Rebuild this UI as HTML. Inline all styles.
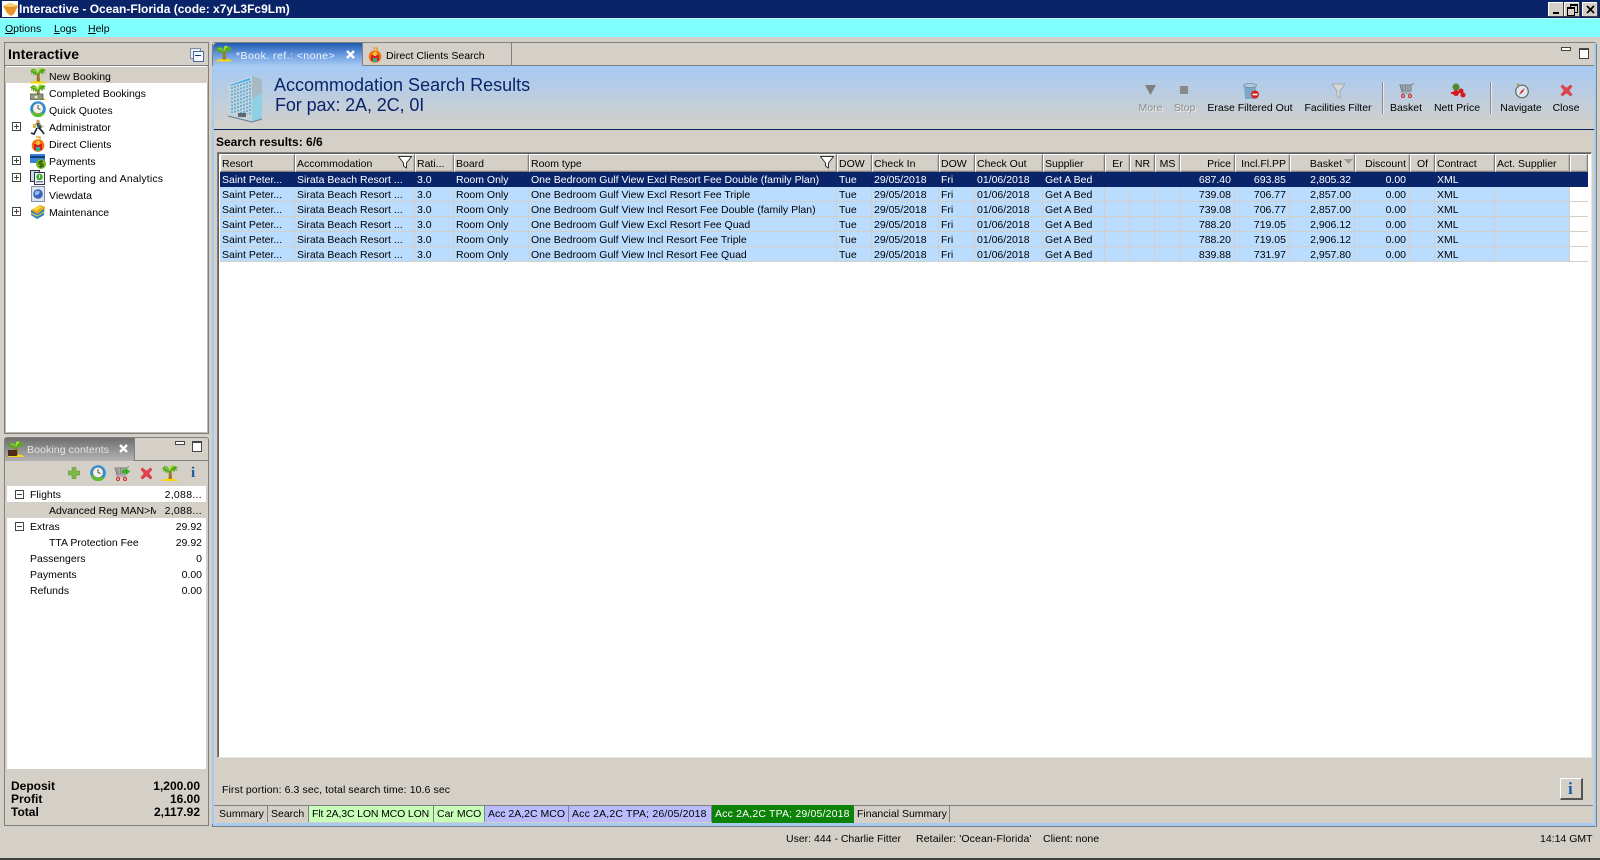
<!DOCTYPE html>
<html><head><meta charset="utf-8"><title>Interactive</title>
<style>
html,body{margin:0;padding:0;width:1600px;height:860px;overflow:hidden;background:#d4d0c8}
body{position:relative;font:10.5px "Liberation Sans",sans-serif;color:#000}
.a,.t,svg.i{position:absolute}
.t{white-space:nowrap;line-height:14px;margin-top:1px}
.b{font-weight:bold}
.c{transform:translateX(-50%)}
.r{text-align:right}
table{position:absolute;border-collapse:separate;border-spacing:0;table-layout:fixed;left:220px;top:154px;width:1368px;font-size:10.5px}
th{height:14px;padding:2px 1px 0;background:#d4d0c8;font-weight:normal;text-align:left;border-top:1px solid #fff;border-left:1px solid #fff;border-right:1px solid #808080;border-bottom:1px solid #808080;box-shadow:inset -1px -1px 0 #bdb9b1;overflow:hidden;white-space:nowrap;box-sizing:content-box;line-height:14px}
td{height:11px;padding:3px 2px 0;background:#badcff;border-right:1px solid #d4d0c8;border-bottom:1px solid #d4d0c8;overflow:hidden;white-space:nowrap;line-height:11px}
td.n,th.n{text-align:right;padding-right:3px}
td.e{background:#fff;border-right:0}
tr.s td{background:#0a246a;color:#fff;border-color:#0a246a}
.w{position:absolute;width:15px;height:14px;top:2px;background:#d4d0c8;border-top:1px solid #fff;border-left:1px solid #fff;box-shadow:1px 1px 0 #404040;box-sizing:border-box}
.tab{position:absolute;top:806px;height:16px;line-height:17px;padding-left:3px;box-sizing:border-box;border-right:1px solid #808080;white-space:nowrap;overflow:hidden}
</style></head><body>
<svg width="0" height="0" style="position:absolute"><defs>
<symbol id="palm" viewBox="0 0 16 16"><path d="M0 16c0-3.500 16-3.500 16 0z" fill="#f8d810"/><path d="M7 6l2.500 0 .5 8-3.500 0z" fill="#9a7a28"/><path d="M8 6C6 0 2 0 0 4l1.500 0-.5 3 2-2 0 3 2-2 .5 2.500zM8 6C9 0 13 0 16 3l-2 .5 1.500 3-2.500-2-.5 3-2-2.500-1 2.500z" fill="#58a820"/><path d="M8 6C7 1 9-1 12 1L9.500 3zM8 6C6 3 4 2 2 3l3 1z" fill="#a8e038"/></symbol>
<symbol id="money" viewBox="0 0 16 16"><use href="#palm"/><rect x="0" y="10" width="13" height="6" fill="#8f9a78" stroke="#444" stroke-width=".7"/><circle cx="6" cy="13" r="1.500" fill="#e8e8d0"/></symbol>
<symbol id="clock" viewBox="0 0 16 16"><circle cx="8" cy="8" r="7.800" fill="#1f8fe8"/><path d="M.5 10a7.800 7.800 0 0 0 14 3l-3-1.500z" fill="#5cc02a"/><circle cx="8" cy="7.500" r="5.300" fill="#f2f2ea" stroke="#777" stroke-width=".6"/><path d="M8 4v3.500l2.500 1" stroke="#555" fill="none"/></symbol>
<symbol id="admin" viewBox="0 0 16 16"><circle cx="8" cy="2.500" r="1.800" fill="#d89a60"/><path d="M6 4l4 0 2 5-4 1z" fill="#2d5f5a"/><path d="M7 9L4 15 1 14M9 9l3 3 2 3" stroke="#1a2038" stroke-width="1.600" fill="none"/><path d="M9 5l5 3" stroke="#d89a60" stroke-width="1"/><rect x="3" y="5" width="3" height="4" fill="#ddb040"/></symbol>
<symbol id="client" viewBox="0 0 16 16"><circle cx="8" cy="9.500" r="6.300" fill="#f07010"/><path d="M4 8l8 0 0 6-8 0z" fill="#d82020"/><rect x="6" y="11" width="4" height="4" fill="#28b090"/><path d="M6 1h4v2l-2 2" stroke="#e8a010" stroke-width="1.300" fill="none"/><circle cx="8" cy="7" r="2" fill="#f8c040"/></symbol>
<symbol id="pay" viewBox="0 0 16 16"><rect x="0" y="1" width="15" height="9" fill="#3880d8"/><rect x="0" y="3" width="15" height="2" fill="#123c80"/><circle cx="11" cy="11" r="5" fill="#78b820"/><path d="M13 8.500h-3a1.200 1.200 0 0 0 0 2.500h2a1.200 1.200 0 0 1 0 2.500H9M11 7v8" stroke="#23500c" stroke-width="1" fill="none"/></symbol>
<symbol id="rep" viewBox="0 0 16 16"><rect x=".5" y="1.500" width="9" height="11" fill="#c8d8e8" stroke="#334" /><rect x="4.500" y="3.500" width="10" height="12" fill="#f4f4f4" stroke="#334"/><circle cx="9.500" cy="8" r="3.300" fill="#38b030"/><path d="M9.500 6v3" stroke="#fff"/><rect x="6" y="12" width="7" height="1.500" fill="#789"/></symbol>
<symbol id="view" viewBox="0 0 16 16"><rect x="1.500" y=".5" width="13" height="15" fill="#dce4ee" stroke="#8090a8"/><circle cx="8" cy="8" r="4.800" fill="#4060c0"/><path d="M5 6c2-2 4-1 5 0l-2 3-3 0z" fill="#88c0f0"/></symbol>
<symbol id="maint" viewBox="0 0 16 16"><path d="M1 6l9-5 5 2-1 8-7 4-6-4z" fill="#e8a818"/><path d="M1 6l6 4 7-5 0 6-7 4-6-4z" fill="#2a80c8"/><path d="M3 5l6-3 3 1-6 4z" fill="#f8d840"/><path d="M1 9l6 3 7-4" stroke="#f8d040" fill="none"/></symbol>
<symbol id="x" viewBox="0 0 16 16"><path d="M3 1l5 4 5-4 2 2-4 5 4 5-2 2-5-4-5 4-2-2 4-5-4-5z" fill="#e4404a" stroke="#c0303a" stroke-width=".5"/></symbol>
<symbol id="cart" viewBox="0 0 16 16"><path d="M1 2h11v6H3z" fill="none" stroke="#777" stroke-width="1"/><path d="M4 2v6M6.500 2v6M9 2v6M1 4h11M2 6h10M12 2l3-1.500M3 8v2h9" stroke="#777" stroke-width=".8" fill="none"/><circle cx="4" cy="13" r="1.500" fill="none" stroke="#d02020"/><circle cx="11" cy="13" r="1.500" fill="none" stroke="#d02020"/></symbol>
</defs></svg>

<!-- title bar -->
<div class="a" style="left:0;top:0;width:1600px;height:18px;background:#0a246a"></div>
<div class="a" style="left:2px;top:1px;width:16px;height:16px;background:#fff"></div>
<svg class="i" style="left:3px;top:3px" width="15" height="13" viewBox="0 0 15 13"><path d="M0 3l7-3 8 3-4 8-3 2-4-3z" fill="#e8962a"/><path d="M0 3l8 1 7-1-7-3z" fill="#f8d070"/></svg>
<div class="t b" style="left:19px;top:2px;margin:0;color:#fff;font-size:12px">Interactive - Ocean-Florida (code: x7yL3Fc9Lm)</div>
<div class="w" style="left:1548px"><div class="a" style="left:4px;top:9px;width:6px;height:2px;background:#000"></div></div>
<div class="w" style="left:1564px"><div class="a" style="left:5px;top:1px;width:6px;height:6px;border:1px solid #000;border-top-width:2px"></div><div class="a" style="left:2px;top:4px;width:6px;height:6px;border:1px solid #000;border-top-width:2px;background:#d4d0c8"></div></div>
<div class="w" style="left:1582px"><svg class="i" style="left:2px;top:1px" width="11" height="11"><path d="M2 2l7 7M9 2l-7 7" stroke="#000" stroke-width="1.800"/></svg></div>

<!-- menu -->
<div class="a" style="left:0;top:18px;width:1600px;height:19px;background:#80ffff;border-top:1px solid #c8f8f8;box-sizing:border-box"></div>
<div class="t" style="left:5px;top:21px"><u>O</u>ptions</div>
<div class="t" style="left:54px;top:21px"><u>L</u>ogs</div>
<div class="t" style="left:88px;top:21px"><u>H</u>elp</div>

<!-- left top panel -->
<div class="a" style="left:4px;top:42px;width:205px;height:392px;border:1px solid #808080;border-width:1px;box-sizing:border-box;background:#fff;box-shadow:inset 0 0 0 1px #bdb9b1"></div>
<div class="a" style="left:5px;top:43px;width:203px;height:22px;background:#d4d0c8;border-bottom:1px solid #808080"></div>
<div class="t b" style="left:8px;top:47px;margin:0;font-size:14px;letter-spacing:.1px">Interactive</div>
<div class="a" style="left:190px;top:48px;width:9px;height:9px;border:1px solid #7b8ca8;background:#e8edf4"></div>
<div class="a" style="left:193px;top:51px;width:9px;height:9px;border:1px solid #4a6a98;background:#f6f8fb"></div>
<div class="a" style="left:195px;top:55px;width:6px;height:1px;background:#123a7a"></div>
<div class="a" style="left:5px;top:67px;width:203px;height:16px;background:#d4d0c8"></div>
<svg class="i" style="left:30px;top:67px" width="16" height="17"><use href="#palm"/></svg>
<svg class="i" style="left:30px;top:84px" width="16" height="16"><use href="#money"/></svg>
<svg class="i" style="left:30px;top:101px" width="16" height="16"><use href="#clock"/></svg>
<svg class="i" style="left:30px;top:119px" width="16" height="16"><use href="#admin"/></svg>
<svg class="i" style="left:30px;top:136px" width="16" height="16"><use href="#client"/></svg>
<svg class="i" style="left:30px;top:153px" width="16" height="16"><use href="#pay"/></svg>
<svg class="i" style="left:30px;top:169px" width="16" height="16"><use href="#rep"/></svg>
<svg class="i" style="left:30px;top:186px" width="16" height="16"><use href="#view"/></svg>
<svg class="i" style="left:30px;top:204px" width="16" height="16"><use href="#maint"/></svg>
<div class="t" style="left:49px;top:69px">New Booking</div>
<div class="t" style="left:49px;top:86px">Completed Bookings</div>
<div class="t" style="left:49px;top:103px">Quick Quotes</div>
<div class="t" style="left:49px;top:120px">Administrator</div>
<div class="t" style="left:49px;top:137px">Direct Clients</div>
<div class="t" style="left:49px;top:154px">Payments</div>
<div class="t" style="left:49px;top:171px;letter-spacing:.17px">Reporting and Analytics</div>
<div class="t" style="left:49px;top:188px">Viewdata</div>
<div class="t" style="left:49px;top:205px">Maintenance</div>
<svg class="i" style="left:12px;top:122px" width="9" height="9"><path d="M.5.500h8v8h-8zM2 4.500h5M4.500 2v5" stroke="#444" fill="#fff"/></svg>
<svg class="i" style="left:12px;top:156px" width="9" height="9"><path d="M.5.500h8v8h-8zM2 4.500h5M4.500 2v5" stroke="#444" fill="#fff"/></svg>
<svg class="i" style="left:12px;top:173px" width="9" height="9"><path d="M.5.500h8v8h-8zM2 4.500h5M4.500 2v5" stroke="#444" fill="#fff"/></svg>
<svg class="i" style="left:12px;top:207px" width="9" height="9"><path d="M.5.500h8v8h-8zM2 4.500h5M4.500 2v5" stroke="#444" fill="#fff"/></svg>

<!-- left bottom panel -->
<div class="a" style="left:4px;top:437px;width:205px;height:389px;border:1px solid #808080;box-sizing:border-box;background:#d4d0c8;border-radius:3px 3px 0 0"></div>
<div class="a" style="left:5px;top:438px;width:130px;height:23px;background:linear-gradient(#6f6f6f,#b4b4b4);border-right:1px solid #808080;box-sizing:border-box"></div>
<div class="a" style="left:135px;top:460px;width:73px;height:1px;background:#808080"></div>
<svg class="i" style="left:8px;top:441px" width="16" height="16"><use href="#palm"/><rect x="0" y="9" width="9" height="6" fill="#4e2c18"/></svg>
<div class="t" style="left:27px;top:442px;color:#e4e4e4;letter-spacing:.1px">Booking contents</div>
<svg class="i" style="left:118px;top:443px" width="11" height="11"><path d="M2 2l7 7M9 2l-7 7" stroke="#fff" stroke-width="2.400"/></svg>
<div class="a" style="left:175px;top:441px;width:8px;height:2px;border:1px solid #444;background:#fff"></div>
<div class="a" style="left:192px;top:441px;width:8px;height:8px;border:1px solid #444;border-top-width:2px;background:#fff"></div>
<svg class="i" style="left:68px;top:467px" width="12" height="12"><path d="M4 0h4v4h4v4H8v4H4V8H0V4h4z" fill="#7cb848" stroke="#5a8c30" stroke-width=".5"/></svg>
<svg class="i" style="left:90px;top:465px" width="16" height="16"><use href="#clock"/></svg>
<svg class="i" style="left:114px;top:466px" width="16" height="16"><use href="#cart"/><path d="M8 4h4V2l4 3.500L12 9V7H8z" fill="#30b020"/></svg>
<svg class="i" style="left:140px;top:467px" width="13" height="13"><use href="#x"/></svg>
<svg class="i" style="left:162px;top:465px" width="16" height="16"><use href="#palm"/></svg>
<div class="t b" style="left:191px;top:466px;margin:0;color:#1a5aa0;font:bold 15px 'Liberation Serif',serif;line-height:15px">i</div>
<div class="a" style="left:7px;top:486px;width:199px;height:283px;background:#fff"></div>
<div class="a" style="left:7px;top:502px;width:199px;height:16px;background:#d4d0c8"></div>
<svg class="i" style="left:15px;top:490px" width="9" height="9"><path d="M.5.500h8v8h-8zM2 4.500h5" stroke="#444" fill="#fff"/></svg>
<svg class="i" style="left:15px;top:522px" width="9" height="9"><path d="M.5.500h8v8h-8zM2 4.500h5" stroke="#444" fill="#fff"/></svg>
<div class="t" style="left:30px;top:487px">Flights</div>
<div class="t" style="left:49px;top:503px;width:107px;overflow:hidden">Advanced Reg MAN&gt;MCO</div>
<div class="t" style="left:30px;top:519px">Extras</div>
<div class="t" style="left:49px;top:535px">TTA Protection Fee</div>
<div class="t" style="left:30px;top:551px">Passengers</div>
<div class="t" style="left:30px;top:567px">Payments</div>
<div class="t" style="left:30px;top:583px">Refunds</div>
<div class="t r" style="right:1398px;top:487px;letter-spacing:.3px">2,088...</div>
<div class="t r" style="right:1398px;top:503px;letter-spacing:.3px">2,088...</div>
<div class="t r" style="right:1398px;top:519px">29.92</div>
<div class="t r" style="right:1398px;top:535px">29.92</div>
<div class="t r" style="right:1398px;top:551px">0</div>
<div class="t r" style="right:1398px;top:567px">0.00</div>
<div class="t r" style="right:1398px;top:583px">0.00</div>
<div class="t b" style="left:11px;top:778px;font-size:12px">Deposit</div>
<div class="t b" style="left:11px;top:791px;font-size:12px">Profit</div>
<div class="t b" style="left:11px;top:804px;font-size:12px">Total</div>
<div class="t b r" style="right:1400px;top:778px;font-size:12px">1,200.00</div>
<div class="t b r" style="right:1400px;top:791px;font-size:12px">16.00</div>
<div class="t b r" style="right:1400px;top:804px;font-size:12px">2,117.92</div>

<!-- right panel -->
<div class="a" style="left:212px;top:42px;width:1385px;height:785px;border:1px solid #808080;box-sizing:border-box;background:#a6caf0;border-radius:3px 3px 0 0"></div>
<div class="a" style="left:213px;top:43px;width:1381px;height:780px;background:#d4d0c8"></div>
<div class="a" style="left:213px;top:65px;width:1381px;height:1px;background:#808080"></div>
<div class="a" style="left:213px;top:43px;width:149px;height:23px;background:linear-gradient(#1f5ab0,#6f9fe4 55%,#a6caf0);border-radius:4px 0 0 0"></div>
<div class="a" style="left:362px;top:43px;width:150px;height:23px;border-left:1px solid #808080;border-right:1px solid #808080;box-sizing:border-box"></div>
<svg class="i" style="left:216px;top:45px" width="16" height="17"><use href="#palm"/></svg>
<div class="t" style="left:236px;top:48px;color:#f0f4fa;letter-spacing:.45px">*Book. ref.: &lt;none&gt;</div>
<svg class="i" style="left:345px;top:49px" width="11" height="11"><path d="M2 2l7 7M9 2l-7 7" stroke="#fff" stroke-width="2.400"/></svg>
<svg class="i" style="left:367px;top:47px" width="16" height="16"><use href="#client"/></svg>
<div class="t" style="left:386px;top:48px">Direct Clients Search</div>
<div class="a" style="left:1561px;top:47px;width:8px;height:2px;border:1px solid #444;background:#fff"></div>
<div class="a" style="left:1579px;top:48px;width:8px;height:8px;border:1px solid #444;border-top-width:2px;background:#fff"></div>

<div class="a" style="left:213px;top:66px;width:1381px;height:63px;background:linear-gradient(#a6caf5,#d4d0c8)"></div>
<div class="a" style="left:213px;top:129px;width:1381px;height:1px;background:#0a246a"></div>
<div class="a" style="left:1594px;top:43px;width:2px;height:782px;background:#a6caf0"></div>
<div class="a" style="left:213px;top:823px;width:1383px;height:2px;background:#a6caf0"></div>
<div class="a" style="left:212px;top:66px;width:2px;height:758px;background:#a6caf0"></div>

<svg class="i" style="left:226px;top:73px" width="38" height="50" viewBox="0 0 38 50">
<path d="M2 11L26 3 36 6 36 46 26 49 2 43z" fill="#c4d2dc"/><path d="M26 3L36 6 36 46 26 49z" fill="#8fd0e4"/><path d="M26 3L36 6 36 20 26 26z" fill="#a8bac2"/>
<path d="M4 12l20-7 0 2-20 6z" fill="#38b0f0"/>
<g stroke="#3aa0d8" stroke-width="1.300" stroke-dasharray="2 1.500"><path d="M6 14v26M9 13v27M12 12v28M15 11v30M18 10v31M21 9v32M24 8v34"/></g>
<path d="M2 43l24 6 10-3" stroke="#707880" fill="none"/><rect x="12" y="40" width="8" height="4" fill="#606870"/>
</svg>
<div class="t" style="left:274px;top:75px;margin:0;color:#0a246a;font-size:18px;line-height:21px">Accommodation Search Results</div>
<div class="t" style="left:275px;top:95px;margin:0;color:#0a246a;font-size:18px;line-height:21px;letter-spacing:-.1px">For pax: 2A, 2C, 0I</div>

<!-- toolbar -->
<svg class="i" style="left:1145px;top:85px" width="12" height="11"><path d="M0 0h11L5.500 10z" fill="#7e7e7e"/></svg>
<div class="a" style="left:1180px;top:86px;width:8px;height:8px;background:#8a8a8a"></div>
<svg class="i" style="left:1243px;top:83px" width="17" height="16" viewBox="0 0 17 16"><path d="M1 2h12l-1 14H2z" fill="#7aa6c8"/><ellipse cx="7" cy="2.500" rx="6.500" ry="2" fill="#b0c8da" stroke="#6a8aa4" stroke-width=".7"/><circle cx="12" cy="11.500" r="4" fill="#d82020"/><rect x="9.500" y="10.700" width="5" height="1.600" fill="#fff"/></svg>
<svg class="i" style="left:1332px;top:83px" width="13" height="16" viewBox="0 0 13 16"><path d="M0 1h13L8 8v7L5 13V8z" fill="#d4d6d8" stroke="#9a9c9e" stroke-width=".7"/></svg>
<div class="a" style="left:1382px;top:82px;width:1px;height:32px;background:#8a8a88;border-right:1px solid #e8e8e8"></div>
<svg class="i" style="left:1399px;top:83px" width="16" height="16"><use href="#cart"/></svg>
<svg class="i" style="left:1450px;top:83px" width="16" height="16" viewBox="0 0 16 16"><circle cx="6" cy="4" r="3.500" fill="#4f8a30"/><circle cx="6" cy="10" r="3" fill="#d81820"/><circle cx="11" cy="8" r="2.500" fill="#d81820"/><circle cx="13" cy="12" r="2.500" fill="#d81820"/><rect x="1" y="9" width="3" height="2" fill="#d81820"/></svg>
<div class="a" style="left:1490px;top:82px;width:1px;height:32px;background:#8a8a88;border-right:1px solid #e8e8e8"></div>
<svg class="i" style="left:1514px;top:83px" width="16" height="16" viewBox="0 0 16 16"><circle cx="8" cy="8.500" r="6.300" fill="#dce8f4" stroke="#606860" stroke-width="1.200"/><path d="M11 5L9 9 5 12 7 8z" fill="#d83020"/><path d="M3 1l3 2" stroke="#a08040" stroke-width="1.500"/></svg>
<svg class="i" style="left:1560px;top:84px" width="13" height="13"><use href="#x"/></svg>
<div class="t c" style="left:1150.500px;top:100px;color:#8b8b8b;text-shadow:1px 1px 0 #eee">More</div>
<div class="t c" style="left:1184.500px;top:100px;color:#8b8b8b;text-shadow:1px 1px 0 #eee">Stop</div>
<div class="t c" style="left:1250px;top:100px">Erase Filtered Out</div>
<div class="t c" style="left:1338px;top:100px">Facilities Filter</div>
<div class="t c" style="left:1406px;top:100px">Basket</div>
<div class="t c" style="left:1457px;top:100px">Nett Price</div>
<div class="t c" style="left:1521px;top:100px">Navigate</div>
<div class="t c" style="left:1566px;top:100px">Close</div>

<div class="t b" style="left:216px;top:134px;font-size:12px">Search results: 6/6</div>

<!-- table -->
<div class="a" style="left:217px;top:152px;width:1373px;height:604px;background:#fff;border:1px solid #808080;border-right-color:#e8e6e0;border-bottom-color:#e8e6e0;box-shadow:inset 1px 1px 0 #606060"></div>
<table>
<colgroup><col style="width:75px"><col style="width:120px"><col style="width:39px"><col style="width:75px"><col style="width:308px"><col style="width:35px"><col style="width:67px"><col style="width:36px"><col style="width:68px"><col style="width:62px"><col style="width:25px"><col style="width:25px"><col style="width:25px"><col style="width:55px"><col style="width:55px"><col style="width:65px"><col style="width:55px"><col style="width:25px"><col style="width:60px"><col style="width:75px"><col style="width:18px"></colgroup>
<tr><th>Resort</th><th>Accommodation</th><th>Rati...</th><th>Board</th><th>Room type</th><th>DOW</th><th>Check In</th><th>DOW</th><th>Check Out</th><th>Supplier</th><th style="text-align:center">Er</th><th style="text-align:center">NR</th><th style="text-align:center">MS</th><th class="n">Price</th><th class="n">Incl.Fl.PP</th><th class="n" style="padding-right:12px">Basket</th><th class="n">Discount</th><th style="text-align:center">Of</th><th>Contract</th><th>Act. Supplier</th><th></th></tr>
<tr class="s"><td>Saint Peter...</td><td>Sirata Beach Resort ...</td><td>3.0</td><td>Room Only</td><td>One Bedroom Gulf View Excl Resort Fee Double (family Plan)</td><td>Tue</td><td>29/05/2018</td><td>Fri</td><td>01/06/2018</td><td>Get A Bed</td><td></td><td></td><td></td><td class="n">687.40</td><td class="n">693.85</td><td class="n">2,805.32</td><td class="n">0.00</td><td></td><td>XML</td><td></td><td></td></tr>
<tr><td>Saint Peter...</td><td>Sirata Beach Resort ...</td><td>3.0</td><td>Room Only</td><td>One Bedroom Gulf View Excl Resort Fee Triple</td><td>Tue</td><td>29/05/2018</td><td>Fri</td><td>01/06/2018</td><td>Get A Bed</td><td></td><td></td><td></td><td class="n">739.08</td><td class="n">706.77</td><td class="n">2,857.00</td><td class="n">0.00</td><td></td><td>XML</td><td></td><td class="e"></td></tr>
<tr><td>Saint Peter...</td><td>Sirata Beach Resort ...</td><td>3.0</td><td>Room Only</td><td>One Bedroom Gulf View Incl Resort Fee Double (family Plan)</td><td>Tue</td><td>29/05/2018</td><td>Fri</td><td>01/06/2018</td><td>Get A Bed</td><td></td><td></td><td></td><td class="n">739.08</td><td class="n">706.77</td><td class="n">2,857.00</td><td class="n">0.00</td><td></td><td>XML</td><td></td><td class="e"></td></tr>
<tr><td>Saint Peter...</td><td>Sirata Beach Resort ...</td><td>3.0</td><td>Room Only</td><td>One Bedroom Gulf View Excl Resort Fee Quad</td><td>Tue</td><td>29/05/2018</td><td>Fri</td><td>01/06/2018</td><td>Get A Bed</td><td></td><td></td><td></td><td class="n">788.20</td><td class="n">719.05</td><td class="n">2,906.12</td><td class="n">0.00</td><td></td><td>XML</td><td></td><td class="e"></td></tr>
<tr><td>Saint Peter...</td><td>Sirata Beach Resort ...</td><td>3.0</td><td>Room Only</td><td>One Bedroom Gulf View Incl Resort Fee Triple</td><td>Tue</td><td>29/05/2018</td><td>Fri</td><td>01/06/2018</td><td>Get A Bed</td><td></td><td></td><td></td><td class="n">788.20</td><td class="n">719.05</td><td class="n">2,906.12</td><td class="n">0.00</td><td></td><td>XML</td><td></td><td class="e"></td></tr>
<tr><td>Saint Peter...</td><td>Sirata Beach Resort ...</td><td>3.0</td><td>Room Only</td><td>One Bedroom Gulf View Incl Resort Fee Quad</td><td>Tue</td><td>29/05/2018</td><td>Fri</td><td>01/06/2018</td><td>Get A Bed</td><td></td><td></td><td></td><td class="n">839.88</td><td class="n">731.97</td><td class="n">2,957.80</td><td class="n">0.00</td><td></td><td>XML</td><td></td><td class="e"></td></tr>
</table>
<svg class="i" style="left:398px;top:156px" width="14" height="13"><path d="M.5.500h13L8.500 7v5l-3-2V7z" fill="#fff" stroke="#333"/></svg>
<svg class="i" style="left:820px;top:156px" width="14" height="13"><path d="M.5.500h13L8.500 7v5l-3-2V7z" fill="#fff" stroke="#333"/></svg>
<svg class="i" style="left:1344px;top:159px" width="9" height="6"><path d="M0 0h9L4.500 5z" fill="#9a9a9a"/></svg>

<!-- footer -->
<div class="t" style="left:222px;top:782px;letter-spacing:.09px">First portion: 6.3 sec, total search time: 10.6 sec</div>
<div class="a" style="left:1560px;top:778px;width:23px;height:22px;background:#d4d0c8;border-top:1px solid #fff;border-left:1px solid #fff;border-right:2px solid #555;border-bottom:2px solid #555;box-sizing:border-box"></div>
<div class="t b" style="left:1568px;top:780px;margin:0;color:#1a5aa0;font:bold 17px 'Liberation Serif',serif;line-height:17px">i</div>
<div class="a" style="left:214px;top:805px;width:1379px;height:1px;background:#808080"></div>
<div class="tab" style="left:215px;width:53px;padding-left:4px">Summary</div>
<div class="tab" style="left:268px;width:41px">Search</div>
<div class="tab" style="left:309px;width:125px;background:#c8ffb8;letter-spacing:-.15px">Flt 2A,3C LON MCO LON</div>
<div class="tab" style="left:434px;width:51px;background:#c8ffb8">Car MCO</div>
<div class="tab" style="left:485px;width:84px;background:#babcff">Acc 2A,2C MCO</div>
<div class="tab" style="left:569px;width:143px;background:#babcff;letter-spacing:.17px">Acc 2A,2C TPA; 26/05/2018</div>
<div class="tab" style="left:712px;width:142px;top:805px;height:18px;line-height:19px;background:#0c8206;color:#fff;border:0;letter-spacing:.17px">Acc 2A,2C TPA; 29/05/2018</div>
<div class="tab" style="left:854px;width:96px">Financial Summary</div>

<!-- status -->
<div class="t" style="left:786px;top:831px">User: 444 - Charlie Fitter</div>
<div class="t" style="left:916px;top:831px;letter-spacing:.12px">Retailer: 'Ocean-Florida'</div>
<div class="t" style="left:1043px;top:831px">Client: none</div>
<div class="t" style="left:1540px;top:831px">14:14 GMT</div>
<div class="a" style="left:0;top:858px;width:1600px;height:2px;background:#404040"></div>
</body></html>
